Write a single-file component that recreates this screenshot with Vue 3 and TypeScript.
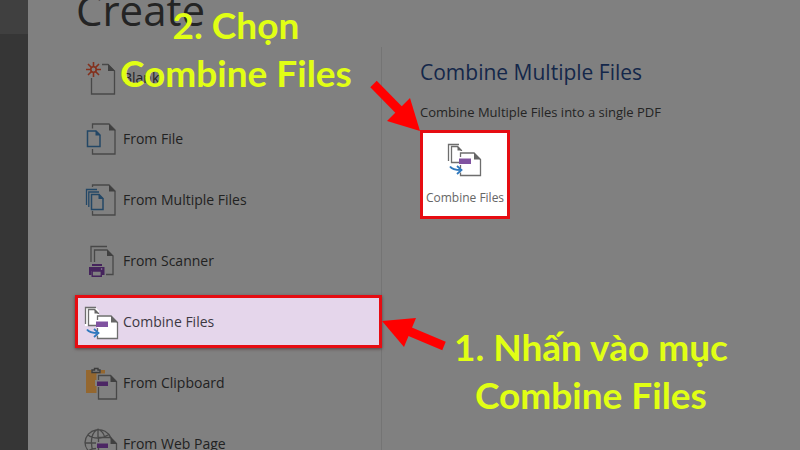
<script setup lang="ts">
import { ref, h, type FunctionalComponent } from 'vue'

type IconName = 'blank' | 'file' | 'multiple' | 'scanner' | 'combine' | 'clipboard' | 'web'

interface Entry {
  icon: IconName
  label: string
}

const entries: Entry[] = [
  { icon: 'blank', label: 'Blank' },
  { icon: 'file', label: 'From File' },
  { icon: 'multiple', label: 'From Multiple Files' },
  { icon: 'scanner', label: 'From Scanner' },
  { icon: 'combine', label: 'Combine Files' },
  { icon: 'clipboard', label: 'From Clipboard' },
  { icon: 'web', label: 'From Web Page' },
]

const selected = ref<IconName>('combine')

const line = (d: string, stroke = '#484848', width = 1.3) =>
  h('path', { d, fill: 'none', stroke, 'stroke-width': width })
const fill = (d: string, color: string) => h('path', { d, fill: color })

const shapes: Record<IconName, () => unknown[]> = {
  blank: () => [
    line('M18 4.5H24L30.500 11V34H7.500V18'),
    fill('M24 4V11H31Z', '#404040'),
    line('M9.500 2V7M9.500 12V17M2 9.500H7M12 9.500H17M4 4L7.500 7.500M11.500 11.500L15 15M15 4L11.500 7.500M7.500 11.500L4 15', '#84301c', 1.6),
    h('circle', { cx: 9.5, cy: 9.5, r: 2.7, fill: 'none', stroke: '#84301c', 'stroke-width': 1.6 }),
  ],
  file: () => [
    line('M8.500 7.500V3H25L31 9V33H8.500V28'),
    fill('M25 3V9.500H31.500Z', '#404040'),
    line('M3.500 10H12L16 14V25.500H3.500Z', '#234766', 1.5),
    fill('M11.500 9.500V14.500H16.500Z', '#234766'),
  ],
  multiple: () => [
    line('M8.500 5V3H25L31 9V33H8.500V29'),
    fill('M25 3V9.500H31.500Z', '#404040'),
    line('M2.500 23V7.500H13M4.800 25V10H15', '#234766', 1.3),
    line('M7.500 12.500H15L19 16.500V27.500H7.500Z', '#234766', 1.5),
    fill('M14.500 12V17H19.500Z', '#234766'),
  ],
  scanner: () => [
    line('M7 19V3.500H23M10.500 19V7H23L29 13V31.500H22'),
    fill('M23 6.500V13H29.500Z', '#404040'),
    fill('M8 21H18V23H8ZM5 24H20.500V32H18V28H7.500V32H5Z', '#45245c'),
    line('M8.200 28V33.300H17.300V28Z', '#45245c', 1.4),
    h('circle', { cx: 17.6, cy: 26, r: 0.8, fill: '#9a8aa2' }),
  ],
  combine: () => [
    fill('M1 3H11L15 7V22H1Z', '#fff'),
    line('M1.500 20V3.500H12', '#6e6e6e'),
    line('M12 21.500H4.500V5.500H10.500L14.500 9.500V10', '#6e6e6e'),
    fill('M10.500 5V9.500H15Z', '#666'),
    fill('M13 11.500H27L33.500 18V34.500H13Z', '#fff'),
    line('M13.500 16V12H27L33.500 18.500V34.500H13.500V31.500M13.500 24V27', '#6e6e6e'),
    fill('M27 11.500V18.500H34Z', '#666'),
    fill('M12 17.500H24V23H12Z', '#8052a0'),
    line('M3 25.500C5 28.500 8 29 14 29M10 25L14.500 29L10 33', '#2f78bd', 1.8),
  ],
  clipboard: () => [
    fill('M2 5H7.500V8H16.500V5H21V8.500H12.500V15H11V21H12.500V28H2Z', '#94672f'),
    line('M8 7.500V5H10.500V3.500H14V5H16V7.500Z', '#3b3b3b', 1.4),
    line('M14.500 15V10.500H26.500L32.500 16.500V34H14.500V22'),
    fill('M26.500 10V17H33Z', '#404040'),
    fill('M13 16.500H24V21H13Z', '#4c2664'),
  ],
  web: () => [
    line('M12 29C5 27 1 22 1 16.500A13.500 13.500 0 0 1 27 12M1 17H12M4 9C9 13 18 13 24 9M4 25C7 23 9 22.500 12 22.500M14 3V11M14 3C9 6 7 11 7.500 17C7.500 22 9 26 12 29M14 3C18 5 20 8 20.500 11'),
    line('M14.500 16V11.500H26.500L32.500 17.500V35H14.500V22'),
    fill('M26.500 11V18H33Z', '#404040'),
    fill('M13 17.500H24V22H13Z', '#4c2664'),
  ],
}

const Icon: FunctionalComponent<{ name: IconName }> = (props) =>
  h('svg', { width: 36, height: 36, viewBox: '0 0 36 36', 'aria-hidden': 'true' }, shapes[props.name]() as never)
Icon.props = ['name']
</script>

<template>
  <div class="app">
    <aside class="rail"><div class="rail-top"></div></aside>
    <main class="main">
      <h1 class="title">Create</h1>
      <div class="columns">
        <nav class="menu" aria-label="Create">
          <button
            v-for="entry in entries"
            :key="entry.icon"
            type="button"
            class="entry"
            :class="{ selected: entry.icon === selected }"
            @click="selected = entry.icon"
          >
            <Icon :name="entry.icon" />
            <span>{{ entry.label }}</span>
          </button>
        </nav>
        <section class="detail">
          <h2>Combine Multiple Files</h2>
          <p>Combine Multiple Files into a single PDF</p>
          <button type="button" class="action">
            <Icon name="combine" />
            <span>Combine Files</span>
          </button>
        </section>
      </div>
    </main>

    <svg class="arrow arrow-two" width="52" height="54" viewBox="0 0 52 54" aria-hidden="true">
      <path d="M3.500 6L29 32" stroke="#f00" stroke-width="9" />
      <path d="M50 53L17 43L40 20Z" fill="#f00" />
    </svg>
    <svg class="arrow arrow-one" width="66" height="34" viewBox="0 0 66 34" aria-hidden="true">
      <path d="M24 13L62 29" stroke="#f00" stroke-width="9" />
      <path d="M0 4L34 1L22 30Z" fill="#f00" />
    </svg>
    <p class="note note-two">2. Chọn<br />Combine Files</p>
    <p class="note note-one">1. Nhấn vào mục<br />Combine Files</p>
  </div>
</template>

<style>
body {
  overflow: hidden;
  background: #808080;
}
</style>

<style scoped>
.app {
  position: relative;
  display: flex;
  height: 100vh;
  overflow: hidden;
  background: #808080;
  color: #242424;
  font-family: "Open Sans", "Noto Sans", sans-serif;
}
.rail {
  flex: 0 0 28px;
  background: #363636;
}
.rail-top {
  height: 34px;
  background: #404040;
}
.main {
  flex: 1;
  min-width: 0;
}
.title {
  height: 47px;
  margin: 0;
  padding-left: 48px;
  font-size: 42px;
  font-weight: 400;
  line-height: 20px;
}
.columns {
  display: grid;
  grid-template-columns: 354px 1fr;
}
.menu {
  display: flex;
  flex-direction: column;
  gap: 8px;
  padding: 4px 0 0 47px;
  border-right: 1px solid #747474;
}
.entry {
  display: flex;
  align-items: center;
  gap: 3px;
  height: 53px;
  padding: 0 6px;
  border: 3px solid transparent;
  background: none;
  color: #222;
  font: 14px "Open Sans", sans-serif;
  text-align: left;
}
.entry.selected {
  margin-right: -1px;
  border-color: #e60c12;
  background: #e5d6eb;
  color: #3c3842;
  box-shadow: 0 1px 3px #5a4040;
}
.detail {
  padding: 10px 20px 0 38px;
}
.detail h2 {
  margin: 0;
  color: #14274a;
  font-size: 21px;
  font-weight: 400;
  line-height: 30px;
}
.detail p {
  margin: 15px 0 8px;
  font-size: 13px;
  line-height: 20px;
}
.action {
  display: flex;
  flex-direction: column;
  align-items: center;
  gap: 12px;
  width: 90px;
  height: 89px;
  padding: 8px 0 0;
  border: 3px solid #e60c12;
  background: #fff;
  color: #666;
  font: 12px "Open Sans", sans-serif;
  white-space: nowrap;
}
.arrow {
  position: absolute;
}
.arrow-two {
  left: 370px;
  top: 78px;
}
.arrow-one {
  left: 382px;
  top: 317px;
}
.note {
  position: absolute;
  margin: 0;
  color: #e1ff14;
  font: 700 37px/48px Lato, sans-serif;
  text-align: center;
  white-space: nowrap;
}
.note-two {
  left: 120px;
  top: 1px;
}
.note-one {
  left: 454px;
  top: 323px;
}
</style>
